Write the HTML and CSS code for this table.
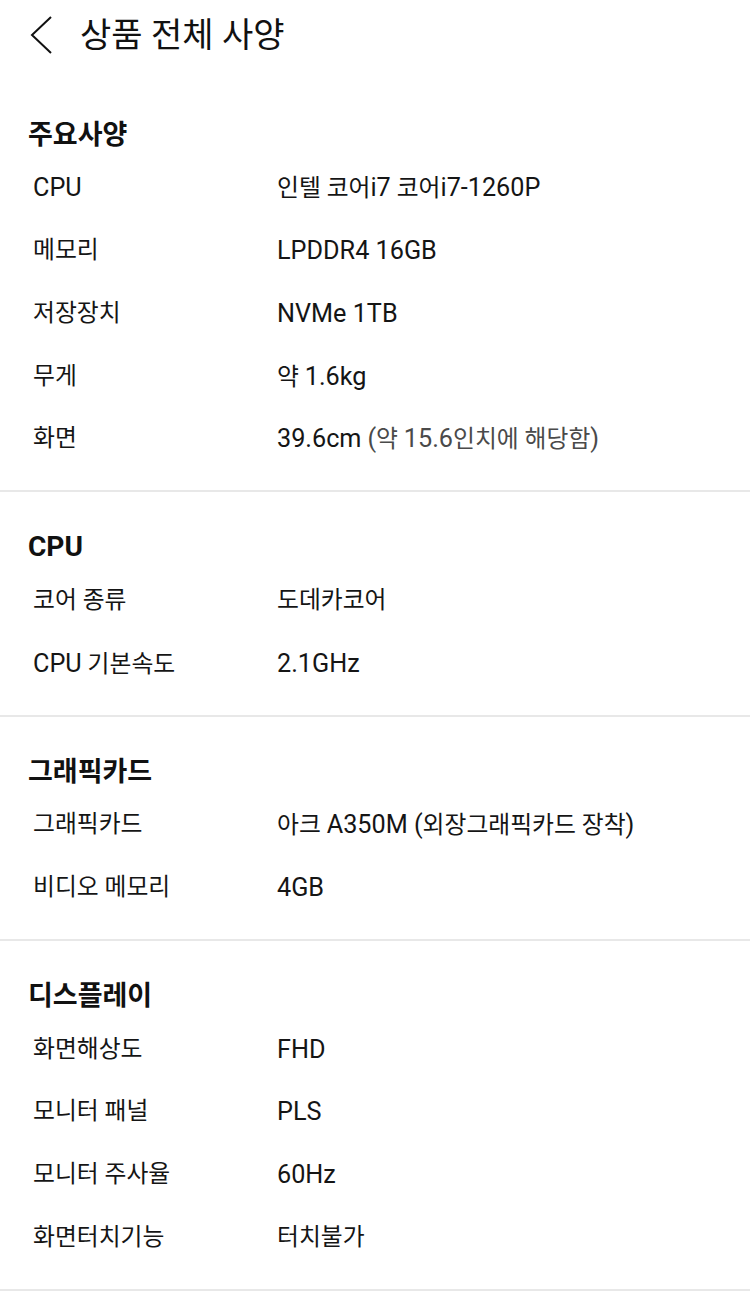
FILE: index.html
```html
<!DOCTYPE html>
<html lang="ko">
<head>
<meta charset="utf-8">
<title>상품 전체 사양</title>
<link rel="stylesheet" href="styles.css">
</head>
<body>
<header class="topbar">
  <svg class="back" width="24" height="40" viewBox="0 0 24 40" aria-hidden="true">
    <polyline points="21,2 2,20 21,38" fill="none" stroke="#111" stroke-width="2"/>
  </svg>
  <h1 class="title">상품 전체 사양</h1>
</header>

<section class="spec">
  <h2 class="spec-title">주요사양</h2>
  <div class="row"><span class="label"><span class="en">CPU</span></span><span class="value">인텔 코어<span class="en">i7</span> 코어<span class="en">i7-1260P</span></span></div>
  <div class="row"><span class="label">메모리</span><span class="value"><span class="en">LPDDR4 16GB</span></span></div>
  <div class="row"><span class="label">저장장치</span><span class="value"><span class="en">NVMe 1TB</span></span></div>
  <div class="row"><span class="label">무게</span><span class="value">약 <span class="en">1.6kg</span></span></div>
  <div class="row"><span class="label">화면</span><span class="value"><span class="en">39.6cm</span> <span class="note"><span class="en">(</span>약 <span class="en">15.6</span>인치에 해당함<span class="en">)</span></span></span></div>
</section>

<section class="spec">
  <h2 class="spec-title"><span class="en">CPU</span></h2>
  <div class="row"><span class="label">코어 종류</span><span class="value">도데카코어</span></div>
  <div class="row"><span class="label"><span class="en">CPU</span> 기본속도</span><span class="value"><span class="en">2.1GHz</span></span></div>
</section>

<section class="spec">
  <h2 class="spec-title">그래픽카드</h2>
  <div class="row"><span class="label">그래픽카드</span><span class="value">아크 <span class="en">A350M (</span>외장그래픽카드 장착<span class="en">)</span></span></div>
  <div class="row"><span class="label">비디오 메모리</span><span class="value"><span class="en">4GB</span></span></div>
</section>

<section class="spec">
  <h2 class="spec-title">디스플레이</h2>
  <div class="row"><span class="label">화면해상도</span><span class="value"><span class="en">FHD</span></span></div>
  <div class="row"><span class="label">모니터 패널</span><span class="value"><span class="en">PLS</span></span></div>
  <div class="row"><span class="label">모니터 주사율</span><span class="value"><span class="en">60Hz</span></span></div>
  <div class="row"><span class="label">화면터치기능</span><span class="value">터치불가</span></div>
</section>
</body>
</html>
```

FILE: styles.css
```css
html, body {
  margin: 0;
  padding: 0;
  background: #ffffff;
}

body {
  font-family: Roboto, "Noto Sans CJK KR", sans-serif;
  color: #151515;
}

.en {
  font-size: 1.06em;
}

.topbar {
  height: 70px;
  display: flex;
  align-items: center;
  padding-left: 30px;
  gap: 26px;
}

.back {
  display: block;
}

.title {
  margin: 0;
  font-size: 34px;
  font-weight: 400;
  line-height: 1;
  color: #111;
}

.spec {
  padding: 33px 0 20px;
  border-bottom: 2px solid #e8e8e8;
}

.spec:first-of-type {
  margin-top: 10px;
}

.spec-title {
  margin: 0;
  height: 44px;
  line-height: 44px;
  padding-left: 28px;
  font-size: 27px;
  font-weight: 700;
  color: #111;
}

.spec-title .en {
  font-size: 1.04em;
}

.row {
  display: grid;
  grid-template-columns: 244px 1fr;
  align-items: center;
  height: 62.7px;
  padding-left: 33px;
  font-size: 23.8px;
  line-height: 1;
}

.label,
.value {
  white-space: nowrap;
}

.note {
  color: #4a4a4a;
}
```
